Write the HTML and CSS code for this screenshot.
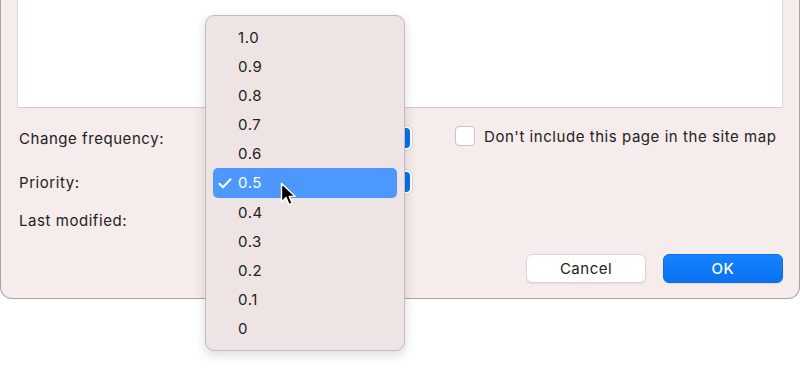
FILE: index.html
```html
<!DOCTYPE html>
<html lang="en">
<head>
  <meta charset="UTF-8" />
  <meta name="viewport" content="width=device-width, initial-scale=1.0"/>
  <title>Page Settings</title>
  <link rel="stylesheet" href="styles.css">
</head>
<body>
  <div class="dialog">
    <div class="preview"></div>

    <div class="form">
      <div class="fields">
        <div class="row">
          <span class="label">Change frequency:</span>
          <span class="select"><span class="arrows"></span></span>
        </div>
        <div class="row">
          <span class="label">Priority:</span>
          <span class="select"><span class="arrows"></span></span>
        </div>
        <div class="row row-last">
          <span class="label">Last modified:</span>
        </div>
      </div>
      <label class="check">
        <span class="box"></span>
        Don't include this page in the site map
      </label>
    </div>

    <div class="buttons">
      <button class="btn">Cancel</button>
      <button class="btn btn-ok">OK</button>
    </div>
  </div>

  <!-- offenes Popup-Menü der Priorität -->
  <ul class="menu">
    <li>1.0</li>
    <li>0.9</li>
    <li>0.8</li>
    <li>0.7</li>
    <li>0.6</li>
    <li class="selected">
      <svg class="tick" width="14" height="11" viewBox="0 0 14 11">
        <path d="M1.5 5.8 L5 9.3 L12.5 1.3" fill="none" stroke="#fff" stroke-width="2" stroke-linecap="round" stroke-linejoin="round"/>
      </svg>0.5
    </li>
    <li>0.4</li>
    <li>0.3</li>
    <li>0.2</li>
    <li>0.1</li>
    <li>0</li>
  </ul>

  <svg class="cursor" width="18" height="26" viewBox="0 0 18 26">
    <path d="M1.5 1.5 L1.5 20 L6 15.6 L9 22.6 L12.2 21.2 L9.3 14.4 L15.3 14.4 Z" fill="#000" stroke="#fff" stroke-width="1.4" stroke-linejoin="round"/>
  </svg>
</body>
</html>
```

FILE: styles.css
```css
body {
  margin: 0;
  background: #fff;
  font-family: Inter, "Liberation Sans", sans-serif;
  font-size: 15px;
  letter-spacing: 0.55px;
  color: #222;
  width: 800px;
  height: 380px;
  overflow: hidden;
  position: relative;
}

.dialog {
  width: 800px;
  height: 299px;
  box-sizing: border-box;
  background: #f6eceb;
  border: 1px solid #a9a3a3;
  border-top: none;
  border-radius: 0 0 12px 12px;
  padding: 0 16px;
}

.preview {
  height: 107px;
  background: #fff;
  border: 1px solid #e2d9d9;
  border-top: none;
  border-bottom-color: #d3cbcb;
}

.form {
  display: flex;
  padding-top: 16px;
}

.fields {
  width: 394px;
  padding-left: 2px;
}

.row {
  display: flex;
  align-items: center;
  justify-content: space-between;
  height: 28px;
  margin-bottom: 16px;
}

.row-last {
  margin-top: -6px;
}

.select {
  width: 196px;
  height: 26px;
  background: #fff;
  border: 1px solid #d9d2d2;
  border-radius: 6px;
  display: flex;
  justify-content: flex-end;
  padding: 2px;
  box-sizing: border-box;
}

.arrows {
  width: 6px;
  height: 20px;
  background: #0b6ef5;
  border-radius: 0 4px 4px 0;
}

.check {
  display: flex;
  align-items: center;
  gap: 9px;
  margin-left: 42px;
  height: 28px;
  margin-top: -2px;
}

.box {
  width: 18px;
  height: 18px;
  background: #fff;
  border: 1px solid #c9c2c2;
  border-radius: 4px;
}

.buttons {
  display: flex;
  justify-content: flex-end;
  gap: 17px;
  margin-top: 4px;
}

.btn {
  width: 120px;
  height: 29px;
  font-family: inherit;
  font-size: 15px;
  letter-spacing: 0.5px;
  color: #222;
  background: #fff;
  border: 1px solid #ddd5d5;
  border-radius: 6px;
  box-shadow: 0 1px 1px rgba(0,0,0,0.08);
}

.btn-ok {
  color: #fff;
  font-weight: 500;
  background: linear-gradient(#1482ff, #0a72f2);
  border-color: #0a6fe8;
}

.menu {
  position: absolute;
  left: 205px;
  top: 15px;
  width: 200px;
  height: 336px;
  box-sizing: border-box;
  margin: 0;
  padding: 7px 7px;
  list-style: none;
  background: #efe4e4;
  border: 1px solid #c4bcbc;
  border-radius: 9px;
  box-shadow: 0 4px 12px rgba(0,0,0,0.15);
}

.menu li {
  height: 29.1px;
  line-height: 29px;
  padding-left: 25px;
  position: relative;
  border-radius: 5px;
}

.menu li.selected {
  background: #4d98fd;
  color: #fff;
}

.tick {
  position: absolute;
  left: 5px;
  top: 10px;
}

.cursor {
  position: absolute;
  left: 280px;
  top: 182px;
}
```
